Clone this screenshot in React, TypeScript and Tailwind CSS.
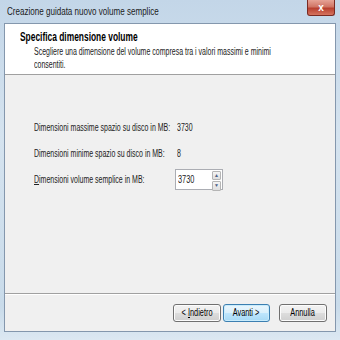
import React from "react";

const font = { fontFamily: '"Liberation Sans", Arial, sans-serif' };

// the reference text is horizontally squeezed; squeeze ours the same way
function T({ children, center }: { children: React.ReactNode; center?: boolean }) {
  return (
    <span className={(center ? "origin-center" : "origin-left") + " inline-block whitespace-nowrap scale-x-[0.7]"}>
      {children}
    </span>
  );
}

function Btn({ children, primary, w }: { children: React.ReactNode; primary?: boolean; w: string }) {
  return (
    <button
      className={
        w +
        (primary
          ? " flex h-[18px] items-center justify-center overflow-hidden rounded-[3px] border border-[#3c7fb1] bg-[linear-gradient(#eaf6fd_0%,#d9f0fc_50%,#bee6fd_51%,#a7d9f5_100%)] text-[10.5px] text-black shadow-[inset_0_0_0_1px_#c9ecfc]"
          : " flex h-[18px] items-center justify-center overflow-hidden rounded-[3px] border border-[#707070] bg-[linear-gradient(#f2f2f2_0%,#ebebeb_50%,#dddddd_51%,#cfcfcf_100%)] text-[10.5px] text-black shadow-[inset_0_0_0_1px_#fcfcfc]")
      }
    >
      <T center>{children}</T>
    </button>
  );
}

export default function App() {
  return (
    <div style={font} className="flex h-[340px] w-[340px] flex-col overflow-hidden bg-[linear-gradient(#c3d6e8,#d5e3ef_40%,#c9dbea_90%,#dce8f2)]">
      {/* title bar */}
      <div className="relative flex h-[23px] items-center pl-[7px] text-[11.5px] text-[#1b1b1b]">
        <T>Creazione guidata nuovo volume semplice</T>
        <div className="absolute right-[5px] top-0 flex h-[16px] w-[28px] items-center justify-center rounded-b-[3px] border border-t-0 border-[#7a2a22] bg-[linear-gradient(#e6a396,#d07565_45%,#b8402f_55%,#d6745f)] text-[10px] font-bold text-white">
          x
        </div>
      </div>

      {/* client */}
      <div className="mx-[4px] flex flex-1 flex-col border border-[#8497ad] bg-[#f0f0f0]">
        <div className="h-[51px] shrink-0 border-b border-[#a0a0a0] bg-white pl-[15px] pt-[6px]">
          <div className="text-[12px] font-bold leading-[14px] text-black">
            <T>Specifica dimensione volume</T>
          </div>
          <div className="pl-[14px] pt-[1px] text-[10px] leading-[13px] text-[#222]">
            <T>Scegliere una dimensione del volume compresa tra i valori massimi e minimi</T>
            <br />
            <T>consentiti.</T>
          </div>
        </div>

        <div className="flex flex-1 flex-col pl-[29px] pt-[39px] text-[10px] text-[#222]">
          <div className="flex h-[26px] items-center">
            <span className="w-[143px] shrink-0">
              <T>Dimensioni massime spazio su disco in MB:</T>
            </span>
            <T>3730</T>
          </div>
          <div className="flex h-[26px] items-center">
            <span className="w-[143px] shrink-0">
              <T>Dimensioni minime spazio su disco in MB:</T>
            </span>
            <T>8</T>
          </div>
          <div className="flex h-[26px] items-center">
            <span className="w-[141px] shrink-0">
              <T>
                <span className="underline">D</span>imensioni volume semplice in MB:
              </T>
            </span>
            <div className="flex h-[21px] w-[48px] border border-[#abadb3] bg-white">
              <span className="flex-1 pl-[2px] pt-[3px] text-[10.5px] leading-[13px]">
                <T>3730</T>
              </span>
              <div className="flex w-[10px] flex-col gap-[1px] py-[1px] pr-[1px]">
                <div className="flex flex-1 items-center justify-center rounded-[1px] border border-[#b5b5b5] bg-[linear-gradient(#f4f4f4,#dedede)] text-[5px] text-[#4d6185]">▲</div>
                <div className="flex flex-1 items-center justify-center rounded-[1px] border border-[#b5b5b5] bg-[linear-gradient(#f4f4f4,#dedede)] text-[5px] text-[#4d6185]">▼</div>
              </div>
            </div>
          </div>
        </div>

        <div className="flex h-[38px] shrink-0 items-center justify-end border-t border-[#a0a0a0] pr-[8px] shadow-[inset_0_1px_0_#fff]">
          <Btn w="w-[48px]">
            &lt; <span className="underline">I</span>ndietro
          </Btn>
          <div className="w-[2px]" />
          <Btn primary w="w-[47px]">
            Avanti &gt;
          </Btn>
          <div className="w-[9px]" />
          <Btn w="w-[48px]">Annulla</Btn>
        </div>
      </div>
      <div className="h-[8px] shrink-0" />
    </div>
  );
}
